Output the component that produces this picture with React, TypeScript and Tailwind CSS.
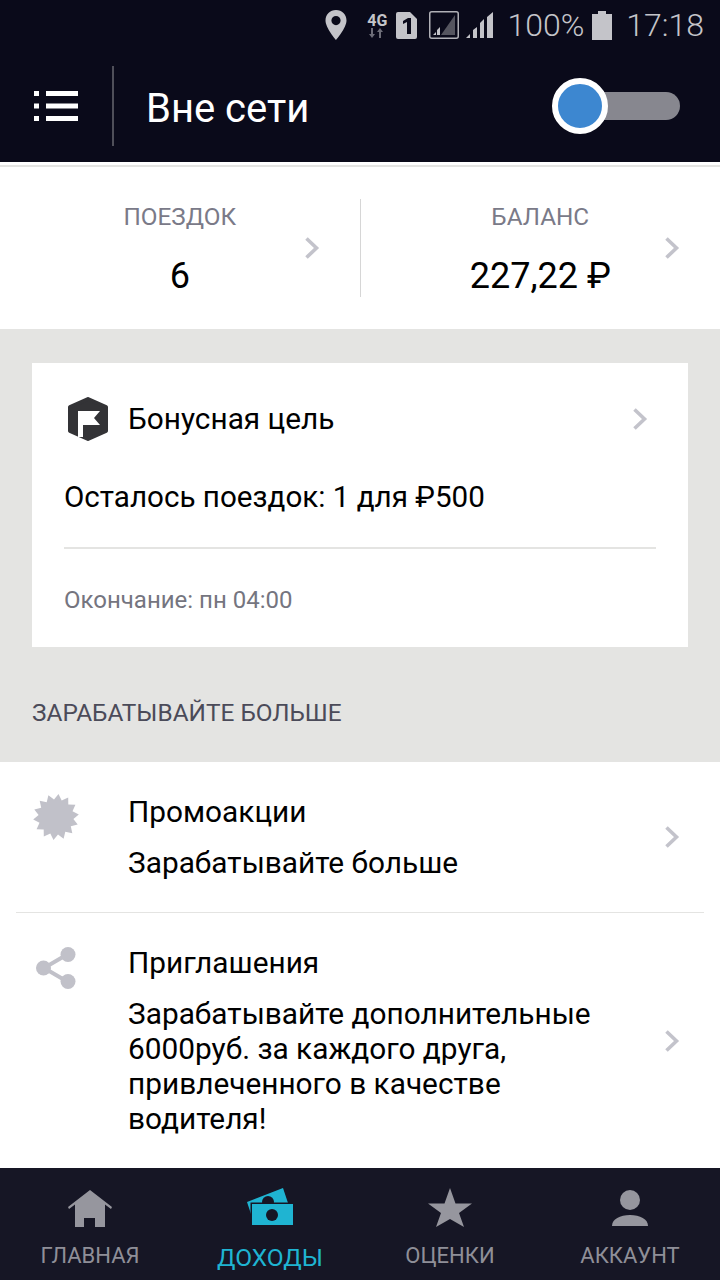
function Chevron({ className = '' }: { className?: string }) {
  return (
    <svg viewBox="0 0 16 24" className={`w-[16px] h-[24px] ${className}`} fill="none" stroke="#c3c3cb" strokeWidth="3.6">
      <path d="M2.5 2.5 L12.5 12 L2.5 21.5" />
    </svg>
  );
}

function StatusBar() {
  return (
    <div className="h-[50px] flex items-center justify-end pr-[16px] text-[#c4c4c9] font-[Roboto,sans-serif] font-light">
      <svg viewBox="0 0 22 30" className="w-[22px] h-[30px] mr-[19px]">
        <path fillRule="evenodd" fill="#c4c4c9" d="M11 0C5 0 0.500 4.600 0.500 10.500 0.500 18 11 30 11 30S21.500 18 21.500 10.500C21.500 4.600 17 0 11 0ZM11 6a4.600 4.600 0 1 1 0 9.200A4.600 4.600 0 0 1 11 6Z" />
      </svg>
      <div className="flex flex-col items-center w-[22px] mr-[8px] mt-[2px]">
        <span className="text-[16px] leading-[14px] font-bold">4G</span>
        <svg viewBox="0 0 16 10" className="w-[16px] h-[10px]">
          <path fill="#6d6d78" d="M3 10 0 6h2V0h2v6h2ZM11 0l3 4h-2v6h-2V4H8Z" />
        </svg>
      </div>
      <svg viewBox="0 0 21 27" className="w-[21px] h-[27px] mr-[12px]">
        <path fill="#c4c4c9" d="M2 0h12l7 7v18a2 2 0 0 1-2 2H2a2 2 0 0 1-2-2V2a2 2 0 0 1 2-2Z" />
        <path fill="#0a0a1a" d="M7 9l5-3h3v16h-4V10l-4 2Z" />
      </svg>
      <svg viewBox="0 0 30 28" className="w-[30px] h-[28px] mr-[7px]">
        <rect x="0.750" y="0.750" width="28.500" height="26.500" rx="2" fill="none" stroke="#b0b0b6" strokeWidth="1.500" />
        <path fill="#55555f" d="M26 4v20H12Z" />
        <path fill="#c4c4c9" d="M4 24l3-3v3ZM8 24v-5l3-3v8Z" />
      </svg>
      <svg viewBox="0 0 28 26" className="w-[28px] h-[26px] mr-[13px]">
        <path fill="#c4c4c9" d="M0 26l4-4v4ZM7 26v-8l4-3v11ZM14 26V11l4-4v19ZM21 26V5l6-5v26Z" />
      </svg>
      <span className="text-[32px] leading-[50px] mr-[8px]">100%</span>
      <svg viewBox="0 0 20 29" className="w-[20px] h-[29px] mr-[14px]">
        <path fill="#c4c4c9" d="M6 0h8v3h6v26H0V3h6Z" />
      </svg>
      <span className="text-[32px] leading-[50px]">17:18</span>
    </div>
  );
}

function Header() {
  return (
    <div className="h-[112px] flex items-center">
      <div className="w-[112px] flex justify-center pr-[1px]">
        <svg viewBox="0 0 44 32" className="w-[44px] h-[32px]">
          <path fill="#fff" d="M0 1h5v5H0ZM12 1h32v5H12ZM0 13.500h5v5H0ZM12 13.500h32v5H12ZM0 26h5v5H0ZM12 26h32v5H12Z" />
        </svg>
      </div>
      <div className="w-[2px] h-[80px] bg-[#4f4f59]" />
      <span className="ml-[32px] mt-[5px] text-[40px] text-white">Вне сети</span>
      <div className="ml-auto mr-[40px] relative w-[128px] h-[56px] flex items-center justify-end">
        <div className="w-[100px] h-[28px] rounded-full bg-[#87878f]" />
        <div className="absolute left-0 top-0 w-[56px] h-[56px] rounded-full bg-[#3d87d0] border-[6px] border-white" />
      </div>
    </div>
  );
}

function Stat({ label, value }: { label: string; value: string }) {
  return (
    <div className="flex-1 relative flex flex-col items-center">
      <span className="text-[24.300px] leading-[30px] text-[#7a7a88] mt-[35px]">{label}</span>
      <span className="text-[36px] leading-[40px] text-black mt-[24px]">{value}</span>
      <Chevron className="absolute right-[40px] top-[69px]" />
    </div>
  );
}

function ListRow({ icon, title, lines, h }: { icon: React.ReactNode; title: string; lines: string[]; h: string }) {
  return (
    <div className={`relative flex pl-[128px] pr-[90px] pt-[32px] ${h}`}>
      <div className="absolute left-[32px] top-[32px] w-[48px] flex justify-center">{icon}</div>
      <div className="flex flex-col">
        <span className="text-[29.800px] leading-[36px] text-black">{title}</span>
        <div className="text-[29.800px] leading-[35px] text-black mt-[15px]">
          {lines.map((l) => (
            <div key={l}>{l}</div>
          ))}
        </div>
      </div>
      <Chevron className="absolute right-[40px] top-1/2 -translate-y-1/2" />
    </div>
  );
}

function NavItem({ label, active, children }: { label: string; active?: boolean; children: React.ReactNode }) {
  return (
    <div className="flex-1 flex flex-col items-center pt-[16px]">
      <div className="h-[48px] flex items-center justify-center">{children}</div>
      <span className={active ? 'text-[24.500px] leading-[30px] mt-[11px] text-[#1fb4d2]' : 'text-[22px] leading-[30px] mt-[9px] text-[#8f8f98]'}>
        {label}
      </span>
    </div>
  );
}

const starburst = Array.from({ length: 28 }, (_, i) => {
  const r = i % 2 === 0 ? 23 : 17.5;
  const a = (i * Math.PI) / 14 - Math.PI / 2 + 0.11;
  return `${(23 + r * Math.cos(a)).toFixed(1)},${(23 + r * Math.sin(a)).toFixed(1)}`;
}).join(' ');

export default function App() {
  return (
    <div className="w-[720px] h-[1280px] overflow-hidden flex flex-col bg-white font-[Roboto,sans-serif]">
      <div className="bg-[#0a0a1a]">
        <StatusBar />
        <Header />
      </div>

      <div className="h-[3px] bg-white" />
      <div className="h-[2px] bg-[#e4e4e2]" />

      {/* Stats */}
      <div className="h-[162px] flex relative">
        <Stat label="ПОЕЗДОК" value="6" />
        <div className="w-[1px] h-[98px] mt-[32px] bg-[#d6d6d6]" />
        <Stat label="БАЛАНС" value="227,22 ₽" />
      </div>

      {/* Bonus goal */}
      <div className="h-[433px] bg-[#e4e4e2] px-[32px] pt-[34px]">
        <div className="h-[284px] bg-white relative px-[32px]">
          <div className="flex items-center pt-[34px] h-[78px]">
            <svg viewBox="0 0 40 44" className="w-[40px] h-[44px] ml-[4px]">
              <polygon fill="#333336" stroke="#333336" strokeWidth="4" strokeLinejoin="round" points="20,2 38,10 38,34 20,42 2,34 2,10" />
              <path fill="#fff" d="M10 14h22l-6 7 6 7H15v12h-5Z" />
            </svg>
            <span className="ml-[20px] text-[29.800px] text-black">Бонусная цель</span>
            <Chevron className="absolute right-[40px] top-[44px]" />
          </div>
          <div className="text-[29.600px] leading-[36px] text-black mt-[38px]">Осталось поездок: 1 для ₽500</div>
          <div className="h-[2px] bg-[#e4e4e2] mt-[32px]" />
          <div className="text-[24px] leading-[30px] text-[#75757f] mt-[36px]">Окончание: пн 04:00</div>
        </div>
        <div className="text-[24.400px] leading-[30px] text-[#4b4b59] mt-[51px]">ЗАРАБАТЫВАЙТЕ БОЛЬШЕ</div>
      </div>

      {/* Earn more */}
      <div className="flex-1">
        <ListRow
          h="h-[150px]"
          title="Промоакции"
          lines={['Зарабатывайте больше']}
          icon={
            <svg viewBox="0 0 46 46" className="w-[46px] h-[46px]">
              <polygon fill="#c1c1c9" points={starburst} />
            </svg>
          }
        />
        <div className="h-[1px] mx-[16px] bg-[#e4e4e2]" />
        <ListRow
          h="h-[255px]"
          title="Приглашения"
          lines={['Зарабатывайте дополнительные', '6000руб. за каждого друга,', 'привлеченного в качестве', 'водителя!']}
          icon={
            <svg viewBox="0 0 40 42" className="w-[40px] h-[42px] mt-[2px]">
              <path stroke="#c1c1c9" strokeWidth="4" fill="none" d="M32 7 8 21 32 35" />
              <circle cx="32" cy="7.500" r="7.500" fill="#c1c1c9" />
              <circle cx="7.500" cy="21" r="7.500" fill="#c1c1c9" />
              <circle cx="32" cy="34.500" r="7.500" fill="#c1c1c9" />
            </svg>
          }
        />
      </div>

      {/* Bottom nav */}
      <div className="h-[112px] bg-[#161625] flex">
        <NavItem label="ГЛАВНАЯ">
          <svg viewBox="0 0 44 37" className="w-[44px] h-[37px]">
            <path fill="#96969e" d="M22 0 44 17l-1 2-6-4.500V37H27V28H16v9H7V14.500L1 19l-1-2Z" />
          </svg>
        </NavItem>
        <NavItem label="ДОХОДЫ" active>
          <svg viewBox="0 0 48 40" className="w-[48px] h-[40px] -mt-[2px]">
            <path fill="#1fb4d2" d="M1 15 37 1l5 15H5v11Z" />
            <circle cx="22" cy="15" r="6" fill="#161625" />
            <rect x="4.500" y="15.500" width="44" height="24" fill="#161625" />
            <rect x="6" y="17" width="41" height="21" fill="#1fb4d2" />
            <circle cx="26" cy="28" r="6" fill="#161625" />
          </svg>
        </NavItem>
        <NavItem label="ОЦЕНКИ">
          <svg viewBox="0 0 44 40" className="w-[44px] h-[40px]">
            <polygon fill="#96969e" points="22,0 27.500,15.500 44,15.500 31,25 36,39 22,31 8,39 13,25 0,15.500 16.500,15.500" />
          </svg>
        </NavItem>
        <NavItem label="АККАУНТ">
          <svg viewBox="0 0 36 36" className="w-[36px] h-[36px]">
            <circle cx="18" cy="10" r="10" fill="#96969e" />
            <path fill="#96969e" d="M0 36c0-7 8-11 18-11s18 4 18 11Z" />
          </svg>
        </NavItem>
      </div>
    </div>
  );
}
